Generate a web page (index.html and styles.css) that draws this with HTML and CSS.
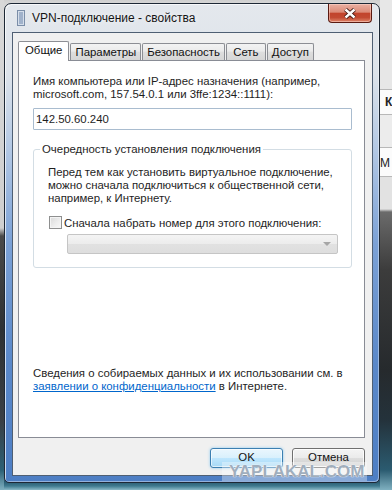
FILE: index.html
```html
<!DOCTYPE html>
<html lang="ru">
<head>
    <meta charset="UTF-8">
    <meta name="viewport" content="width=device-width, initial-scale=1.0">
    <title>VPN-подключение - свойства</title>
    <link rel="stylesheet" href="styles.css">
</head>
<body>

    <div class="desk">
        <div class="desk-left"></div>

        <div class="window">
            <div class="titlebar">
                <svg class="title-icon" width="8" height="16" viewBox="0 0 8 16">
                    <rect x="0.5" y="0.5" width="7" height="15" fill="#d5deea" stroke="#7b8ea8"/>
                    <path d="M2 3h4M2 5h4M2 7h4M2 9h4M2 11h4M2 13h4" stroke="#6d86ab" stroke-width="1"/>
                </svg>
                <span class="title">VPN-подключение - свойства</span>
                <div class="close-btn">
                    <svg width="14" height="11" viewBox="0 0 14 11">
                        <path d="M2.5 1.5L11.5 9.5M11.5 1.5L2.5 9.5" stroke="#3b1510" stroke-width="4.2"/>
                        <path d="M2.5 1.5L11.5 9.5M11.5 1.5L2.5 9.5" stroke="#ffffff" stroke-width="2.4"/>
                    </svg>
                </div>
            </div>

            <div class="client">
                <div class="tabs">
                    <div class="tab active">Общие</div>
                    <div class="tab">Параметры</div>
                    <div class="tab">Безопасность</div>
                    <div class="tab">Сеть</div>
                    <div class="tab">Доступ</div>
                </div>

                <div class="panel">
                    <p class="text">Имя компьютера или IP-адрес назначения (например,<br>microsoft.com, 157.54.0.1 или 3ffe:1234::1111):</p>
                    <div class="input">142.50.60.240</div>

                    <fieldset class="group">
                        <legend>Очередность установления подключения</legend>
                        <p class="text">Перед тем как установить виртуальное подключение,<br>можно сначала подключиться к общественной сети,<br>например, к Интернету.</p>
                        <label class="check"><span class="check-box"></span>Сначала набрать номер для этого подключения:</label>
                        <div class="combo"><span class="combo-arrow"></span></div>
                    </fieldset>

                    <p class="text privacy">Сведения о собираемых данных и их использовании см. в<br><a href="#">заявлении о конфиденциальности</a> в Интернете.</p>
                </div>

                <div class="buttons">
                    <button class="btn btn-default">OK</button>
                    <button class="btn">Отмена</button>
                </div>
            </div>
        </div>

        <div class="desk-right">
            <div class="row row-gray"></div>
            <div class="row row-white row-k">К</div>
            <div class="row row-gray2"></div>
            <div class="row row-white row-m">М</div>
            <div class="row row-light"></div>
        </div>
    </div>

    <div class="watermark">YAPLAKAL.COM</div>

</body>
</html>
```

FILE: styles.css
```css
* {
    margin: 0;
    padding: 0;
    box-sizing: border-box;
}

body {
    width: 392px;
    height: 501px;
    overflow: hidden;
    position: relative;
    background-color: #ffffff;
    font-family: "Liberation Sans", Arial, sans-serif;
    font-size: 11.4px;
    color: #1e1e1e;
}

/* desktop behind the dialog */
.desk {
    display: flex;
    width: 392px;
    height: 490px;
    background: linear-gradient(#cfcfcf 0, #d6d6d6 3px, #d6d6d6 474px, #25546a 481px, #3f7a8f 486px, #8dbac8 490px);
}

.desk-left {
    flex: 0 0 4px;
    background: linear-gradient(#d8d8d8 0, #cfcfcf 228px, #4a4a4a 236px, #2e3133 330px, #3a3f44 420px, #2c6075 470px, #7fb0c0 490px);
}

.desk-right {
    flex: 0 0 12px;
    overflow: hidden;
    background: linear-gradient(#e2e2e2 0, #e2e2e2 209px, #6b6b6b 212px, #3c3c3c 270px, #262a2d 370px, #24323b 420px, #2b5b70 470px, #7fb0c0 490px);
}

.row {
    font-weight: bold;
    font-size: 12px;
    color: #222;
}

.row-gray {
    height: 90px;
    background-color: #e7e7e7;
    border-bottom: 1px solid #b8b8b8;
}

.row-white {
    background-color: #fbfbfb;
    border-bottom: 1px solid #b8b8b8;
}

.row-k {
    height: 25px;
    padding: 5px 0 0 5px;
}

.row-gray2 {
    height: 33px;
    background-color: #ececec;
    border-bottom: 1px solid #b8b8b8;
}

.row-m {
    height: 29px;
    padding: 8px 0 0 0;
    font-weight: normal;
}

.row-light {
    height: 32px;
    background-color: #e2e2e2;
}

/* dialog window */
.window {
    position: relative;
    z-index: 1;
    flex: 0 0 376px;
    height: 480px;
    margin-top: 3px;
    padding: 0 6px 6px 7px;
    display: flex;
    flex-direction: column;
    border: 1px solid #1d2835;
    border-radius: 7px 7px 5px 5px;
    background: linear-gradient(#e4e8ed 0, #dde3ea 70px, #b3c8e4 145px, #7ba1d6 240px, #5a88c9 360px, #4d7ec4 480px);
    box-shadow: inset 1px 1px 0 rgba(255, 255, 255, 0.7), inset -1px -1px 0 rgba(255, 255, 255, 0.4);
}

.titlebar {
    height: 28px;
    display: flex;
    align-items: flex-start;
}

.title-icon {
    margin: 6px 0 0 5px;
}

.title {
    margin: 7px 0 0 7px;
    font-size: 12px;
    color: #151515;
    text-shadow: 0 0 6px #ffffff;
}

.close-btn {
    margin-left: auto;
    margin-right: 1px;
    width: 44px;
    height: 19px;
    display: flex;
    align-items: center;
    justify-content: center;
    border: 1px solid #5a1b12;
    border-top: none;
    border-radius: 0 0 4px 4px;
    background: linear-gradient(#eab0a2 0, #dc8b78 45%, #c2442c 52%, #c24a32 75%, #e0866a 100%);
    box-shadow: inset 0 0 0 1px rgba(255, 220, 210, 0.5);
}

.client {
    flex: 1;
    display: flex;
    flex-direction: column;
    padding: 8px 7px 7px 5px;
    background-color: #f0f0f0;
    border: 1px solid #4f5f73;
}

/* tabs */
.tabs {
    height: 19px;
    display: flex;
    align-items: flex-end;
}

.tab {
    min-width: 40px;
    height: 17px;
    line-height: 16px;
    padding: 0 4px;
    margin-left: 1px;
    text-align: center;
    color: #111;
    border: 1px solid #8c8e94;
    border-bottom: none;
    border-radius: 2px 2px 0 0;
    background: linear-gradient(#f3f3f3 0, #ebebeb 45%, #dedede 50%, #d6d6d6 100%);
}

.tab.active {
    position: relative;
    z-index: 1;
    height: 20px;
    line-height: 17px;
    margin: 0 0 -1px 0;
    padding: 0 6px;
    background: #ffffff;
}

.panel {
    height: 378px;
    display: flex;
    flex-direction: column;
    align-items: flex-start;
    padding: 14px 12px 0 14px;
    background-color: #ffffff;
    border: 1px solid #898c95;
}

.text {
    line-height: 13px;
}

.input {
    width: 100%;
    height: 22px;
    margin-top: 7px;
    padding-left: 2px;
    line-height: 20px;
    border: 1px solid #a9bccf;
    border-radius: 1px;
}

/* group box */
.group {
    width: 100%;
    margin-top: 13px;
    padding: 10px 13px 13px 14px;
    border: 1px solid #d3dde4;
    border-radius: 3px;
}

.group legend {
    margin-left: -8px;
    padding: 0 2px;
    line-height: 13px;
}

.check {
    display: flex;
    align-items: center;
    gap: 2px;
    height: 13px;
    margin-top: 11px;
}

.check-box {
    width: 13px;
    height: 13px;
    margin-left: 1px;
    border: 1px solid #8e8f8f;
    background: linear-gradient(135deg, #d9d9d9 0, #eeeeee 60%, #f8f8f8 100%);
    box-shadow: inset 0 0 0 1px #f4f4f4;
}

.combo {
    display: flex;
    align-items: center;
    justify-content: flex-end;
    height: 20px;
    margin: 5px 0 0 19px;
    padding-right: 6px;
    border: 1px solid #c5c5c5;
    border-radius: 2px;
    background: linear-gradient(#f4f4f4 0, #ececec 50%, #e1e1e1 52%, #dedede 100%);
}

.combo-arrow {
    width: 0;
    height: 0;
    border-left: 4px solid transparent;
    border-right: 4px solid transparent;
    border-top: 4px solid #a6a6a6;
}

.privacy {
    margin-top: auto;
    margin-bottom: 44px;
}

.privacy a {
    color: #0066cc;
}

/* dialog buttons */
.buttons {
    display: flex;
    justify-content: flex-end;
    gap: 9px;
    margin-top: 10px;
}

.btn {
    width: 73px;
    height: 20px;
    padding-bottom: 2px;
    font-family: inherit;
    font-size: 11.4px;
    line-height: 12px;
    color: #111;
    border: 1px solid #707070;
    border-radius: 3px;
    background: linear-gradient(#f4f4f4 0, #ebebeb 48%, #dddddd 52%, #cfcfcf 100%);
    box-shadow: inset 0 0 0 1px rgba(255, 255, 255, 0.8);
}

.btn-default {
    border-color: #3c7fb1;
    background: linear-gradient(#eaf6fd 0, #d9f0fc 48%, #bee6fd 52%, #a7d9f5 100%);
    box-shadow: inset 0 0 0 1px rgba(255, 255, 255, 0.6), 0 0 3px #8ccaf0;
}

.watermark {
    position: absolute;
    z-index: 2;
    left: 222px;
    top: 462px;
    width: 145px;
    height: 19px;
    padding: 3px 0 0 7px;
    line-height: 14px;
    font-size: 17px;
    font-weight: bold;
    color: #a0aebd;
    background-color: rgba(255, 255, 255, 0.35);
    text-shadow: 0 0 1px #ffffff, 0 0 1px #ffffff;
}
```
